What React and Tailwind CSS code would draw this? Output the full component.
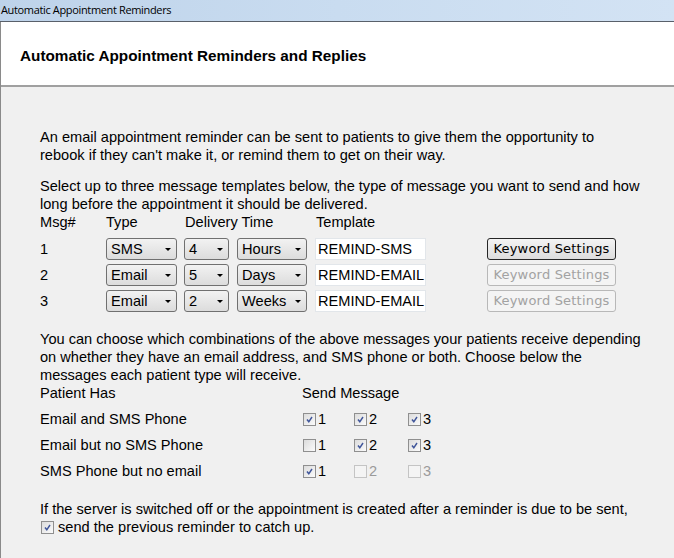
import React from "react";

const font = { fontFamily: '"Liberation Sans", Arial, sans-serif' };

function Combo({ value, width }) {
    return (
        <div
            className={`${width} h-[22px] flex items-center justify-between pl-[4px] pr-[5px] rounded-[3px] border border-[#707070] bg-gradient-to-b from-[#f2f2f2] to-[#dcdcdc] text-black`}
        >
            <span>{value}</span>
            <span className="w-0 h-0 border-l-[3px] border-r-[3px] border-t-[3px] border-l-transparent border-r-transparent border-t-black" />
        </div>
    );
}

function Check({ checked, disabled, label }) {
    return (
        <div className={`flex items-center gap-[2px] ${disabled ? "text-[#9a9a9a]" : "text-black"}`}>
            <span
                className={`w-[13px] h-[13px] flex items-center justify-center border ${
                    disabled ? "border-[#c4c4c4] bg-[#f4f4f4]" : "border-[#8f8f8f] bg-gradient-to-br from-[#dcdcdc] to-[#fbfbfb]"
                }`}
            >
                {checked && (
                    <svg width="9" height="9" viewBox="0 0 9 9">
                        <path d="M2 4.5 L3.8 6.8 L7 2" fill="none" stroke="#40569a" strokeWidth="1.5" />
                    </svg>
                )}
            </span>
            {label && <span>{label}</span>}
        </div>
    );
}

const msgRows = [
    { n: "1", type: "SMS", num: "4", unit: "Hours", tpl: "REMIND-SMS", enabled: true },
    { n: "2", type: "Email", num: "5", unit: "Days", tpl: "REMIND-EMAIL", enabled: false },
    { n: "3", type: "Email", num: "2", unit: "Weeks", tpl: "REMIND-EMAIL", enabled: false },
];

const patientRows = [
    { label: "Email and SMS Phone", checks: [[true, false], [true, false], [true, false]] },
    { label: "Email but no SMS Phone", checks: [[false, false], [true, false], [true, false]] },
    { label: "SMS Phone but no email", checks: [[true, false], [false, true], [false, true]] },
];

export default function App() {
    return (
        <div className="w-[674px] h-[558px] overflow-hidden flex flex-col bg-[#f0f0f0]" style={font}>
            {/* title bar */}
            <div className="h-[22px] flex items-center pl-[1px] bg-gradient-to-r from-[#bed3ea] via-[#c9dcf0] to-[#d3e3f4] border-b border-[#59606a]">
                <span className="text-[11px] text-black" style={{ fontFamily: '"Open Sans", "Noto Sans", sans-serif', letterSpacing: "-0.35px" }}>
                    Automatic Appointment Reminders
                </span>
            </div>

            <div className="flex-1 flex flex-col border-l border-[#8a8a8a]">
                {/* header */}
                <div className="h-[65px] shrink-0 bg-white flex items-center pl-[19px] pt-[6px] border-b-2 border-[#a0a0a0]">
                    <h1 className="text-[15.3px] font-bold text-black">Automatic Appointment Reminders and Replies</h1>
                </div>

                {/* body */}
                <div className="flex-1 pl-[39px] pt-[41px] text-[14.6px] leading-[18px] text-black">
                    <p>
                        An email appointment reminder can be sent to patients to give them the opportunity to
                        <br />
                        rebook if they can't make it, or remind them to get on their way.
                    </p>

                    <p className="mt-[13px]">
                        Select up to three message templates below, the type of message you want to send and how
                        <br />
                        long before the appointment it should be delivered.
                    </p>

                    <div className="grid grid-cols-[66px_78px_53px_78px_172px_130px] items-center">
                        <span>Msg#</span>
                        <span>Type</span>
                        <span className="col-span-2 pl-[1px]">Delivery Time</span>
                        <span className="pl-[1px]">Template</span>
                        <span />
                    </div>

                    <div className="mt-[7px] flex flex-col gap-[4px]">
                        {msgRows.map((r) => (
                            <div key={r.n} className="grid grid-cols-[66px_78px_53px_78px_172px_130px] items-center">
                                <span>{r.n}</span>
                                <Combo value={r.type} width="w-[71px]" />
                                <Combo value={r.num} width="w-[45px]" />
                                <Combo value={r.unit} width="w-[70px]" />
                                <div className="w-[111px] h-[22px] overflow-hidden whitespace-nowrap bg-white border border-[#e2e6ea] flex items-center pl-[2px]">
                                    {r.tpl}
                                </div>
                                <button
                                    className={`w-[129px] h-[22px] rounded-[3px] ${
                                        r.enabled
                                            ? "border border-[#262626] bg-gradient-to-b from-[#f4f4f4] to-[#dddddd] text-black"
                                            : "border border-[#b8b8b8] bg-[#f4f4f4] text-[#a2a2a2]"
                                    }`}
                                    style={{ fontFamily: '"DejaVu Sans", Verdana, sans-serif', fontSize: "13px", letterSpacing: "0.2px" }}
                                >
                                    Keyword Settings
                                </button>
                            </div>
                        ))}
                    </div>

                    <p className="mt-[18px]">
                        You can choose which combinations of the above messages your patients receive depending
                        <br />
                        on whether they have an email address, and SMS phone or both. Choose below the
                        <br />
                        messages each patient type will receive.
                    </p>

                    <div className="flex">
                        <span className="w-[262px]">Patient Has</span>
                        <span>Send Message</span>
                    </div>

                    <div className="mt-[8px] flex flex-col gap-[8px]">
                        {patientRows.map((r) => (
                            <div key={r.label} className="flex items-center h-[18px]">
                                <span className="w-[263px]">{r.label}</span>
                                <div className="w-[50px]">
                                    <Check checked={r.checks[0][0]} disabled={r.checks[0][1]} label="1" />
                                </div>
                                <div className="w-[55px] pl-[1px]">
                                    <Check checked={r.checks[1][0]} disabled={r.checks[1][1]} label="2" />
                                </div>
                                <div>
                                    <Check checked={r.checks[2][0]} disabled={r.checks[2][1]} label="3" />
                                </div>
                            </div>
                        ))}
                    </div>

                    <p className="mt-[20px]">
                        If the server is switched off or the appointment is created after a reminder is due to be sent,
                    </p>
                    <div className="flex items-center gap-[4px] pl-[1px]">
                        <Check checked />
                        <span>send the previous reminder to catch up.</span>
                    </div>
                </div>
            </div>
        </div>
    );
}
